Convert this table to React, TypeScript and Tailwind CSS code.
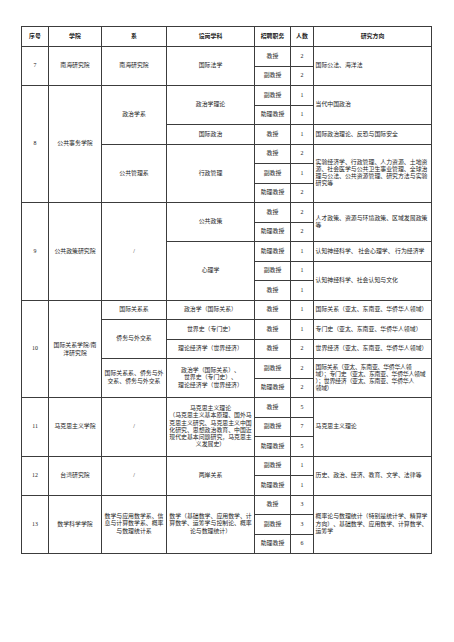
import type { ReactNode } from 'react';

type CellProps = {
  children?: ReactNode;
  span?: string;
  left?: boolean;
  bold?: boolean;
  className?: string;
};

function Cell({ children, span = '', left = false, bold = false, className = '' }: CellProps) {
  return (
    <div
      className={`flex items-center bg-white whitespace-pre leading-[7.2px] ${
        left ? 'justify-start pl-[1.5px] text-left' : 'justify-center px-[1px] text-center'
      } ${bold ? 'font-bold' : ''} ${span} ${className}`}
    >
      <span>{children}</span>
    </div>
  );
}

const headers = ['序号', '学院', '系', '设岗学科', '招聘职务', '人数', '研究方向'];

export default function App() {
  return (
    <div className="min-h-[642px] w-[454px] bg-white pt-[26px] pl-[21px]">
      <div
        className="grid w-max grid-cols-[26px_52px_64px_87px_35px_22px_117px] grid-rows-[19px_repeat(26,18.5px)] gap-px bg-[#3c3c3c] p-px text-[5.9px] text-[#1c1c1c]"
        style={{ fontFamily: '"Liberation Serif", "Noto Sans CJK SC", serif' }}
      >
        {headers.map((h) => (
          <Cell key={h} bold>
            {h}
          </Cell>
        ))}

        {/* 7 */}
        <Cell span="row-span-2">7</Cell>
        <Cell span="row-span-2">南海研究院</Cell>
        <Cell span="row-span-2">南海研究院</Cell>
        <Cell span="row-span-2">国际法学</Cell>
        <Cell>教授</Cell>
        <Cell>2</Cell>
        <Cell span="row-span-2" left>
          国际公法、海洋法
        </Cell>
        <Cell>副教授</Cell>
        <Cell>2</Cell>

        {/* 8 */}
        <Cell span="row-span-6">8</Cell>
        <Cell span="row-span-6">公共事务学院</Cell>
        <Cell span="row-span-3">政治学系</Cell>
        <Cell span="row-span-2">政治学理论</Cell>
        <Cell>副教授</Cell>
        <Cell>1</Cell>
        <Cell span="row-span-2" left>
          当代中国政治
        </Cell>
        <Cell>助理教授</Cell>
        <Cell>1</Cell>
        <Cell>国际政治</Cell>
        <Cell>教授</Cell>
        <Cell>1</Cell>
        <Cell left>国际政治理论、反恐与国际安全</Cell>
        <Cell span="row-span-3">公共管理系</Cell>
        <Cell span="row-span-3">行政管理</Cell>
        <Cell>教授</Cell>
        <Cell>2</Cell>
        <Cell span="row-span-3" left>
          {'实验经济学、行政管理、人力资源、土地资\n源、社会医学与公共卫生事业管理、全球治\n理与公法、公共资源管理、研究方法与实验\n研究等'}
        </Cell>
        <Cell>副教授</Cell>
        <Cell>1</Cell>
        <Cell>助理教授</Cell>
        <Cell>2</Cell>

        {/* 9 */}
        <Cell span="row-span-5">9</Cell>
        <Cell span="row-span-5">公共政策研究院</Cell>
        <Cell span="row-span-5">/</Cell>
        <Cell span="row-span-2">公共政策</Cell>
        <Cell>教授</Cell>
        <Cell>2</Cell>
        <Cell span="row-span-2" left>
          {'人才政策、资源与环境政策、区域发展政策\n等'}
        </Cell>
        <Cell>助理教授</Cell>
        <Cell>2</Cell>
        <Cell span="row-span-3">心理学</Cell>
        <Cell>助理教授</Cell>
        <Cell>1</Cell>
        <Cell left>认知神经科学、 社会心理学、 行为经济学</Cell>
        <Cell>副教授</Cell>
        <Cell>1</Cell>
        <Cell span="row-span-2" left>
          认知神经科学、社会认知与文化
        </Cell>
        <Cell>教授</Cell>
        <Cell>1</Cell>

        {/* 10 */}
        <Cell span="row-span-5">10</Cell>
        <Cell span="row-span-5" className="leading-[8px]">
          {'国际关系学院/南\n洋研究院'}
        </Cell>
        <Cell>国际关系系</Cell>
        <Cell>政治学（国际关系）</Cell>
        <Cell>教授</Cell>
        <Cell>1</Cell>
        <Cell left>国际关系（亚太、东南亚、华侨华人领域）</Cell>
        <Cell span="row-span-2">侨务与外交系</Cell>
        <Cell>世界史（专门史）</Cell>
        <Cell>教授</Cell>
        <Cell>1</Cell>
        <Cell left>专门史（亚太、东南亚、华侨华人领域）</Cell>
        <Cell>理论经济学（世界经济）</Cell>
        <Cell>教授</Cell>
        <Cell>2</Cell>
        <Cell left>世界经济（亚太、东南亚、华侨华人领域）</Cell>
        <Cell span="row-span-2" className="leading-[7.6px]">
          {'国际关系系、侨务与外\n交系、侨务与外交系'}
        </Cell>
        <Cell span="row-span-2" className="leading-[7.6px]">
          {'政治学（国际关系）、\n世界史（专门史）、\n理论经济学（世界经济）'}
        </Cell>
        <Cell>副教授</Cell>
        <Cell>2</Cell>
        <Cell span="row-span-2" left className="tracking-[-0.25px]">
          {'国际关系（亚太、东南亚、华侨华人领\n域）；专门史（亚太、东南亚、华侨华人领域\n）；世界经济（亚太、东南亚、华侨华人\n领域）'}
        </Cell>
        <Cell>助理教授</Cell>
        <Cell>2</Cell>

        {/* 11 */}
        <Cell span="row-span-3">11</Cell>
        <Cell span="row-span-3">马克思主义学院</Cell>
        <Cell span="row-span-3">/</Cell>
        <Cell span="row-span-3">
          {'马克思主义理论\n（马克思主义基本原理、国外马\n克思主义研究、马克思主义中国\n化研究、思想政治教育、中国近\n现代史基本问题研究，马克思主\n义发展史）'}
        </Cell>
        <Cell>教授</Cell>
        <Cell>5</Cell>
        <Cell span="row-span-3" left>
          马克思主义理论
        </Cell>
        <Cell>副教授</Cell>
        <Cell>7</Cell>
        <Cell>助理教授</Cell>
        <Cell>5</Cell>

        {/* 12 */}
        <Cell span="row-span-2">12</Cell>
        <Cell span="row-span-2">台湾研究院</Cell>
        <Cell span="row-span-2">/</Cell>
        <Cell span="row-span-2">两岸关系</Cell>
        <Cell>副教授</Cell>
        <Cell>1</Cell>
        <Cell span="row-span-2" left>
          历史、政治、经济、教育、文学、法律等
        </Cell>
        <Cell>助理教授</Cell>
        <Cell>1</Cell>

        {/* 13 */}
        <Cell span="row-span-3">13</Cell>
        <Cell span="row-span-3">数学科学学院</Cell>
        <Cell span="row-span-3" className="leading-[7.6px]">
          {'数学与应用数学系、信\n息与计算数学系、概率\n与数理统计系'}
        </Cell>
        <Cell span="row-span-3" className="leading-[7.6px]">
          {'数学（基础数学、应用数学、计\n算数学、运筹学与控制论、概率\n论与数理统计）'}
        </Cell>
        <Cell>教授</Cell>
        <Cell>3</Cell>
        <Cell span="row-span-3" left>
          {'概率论与数理统计（特别是统计学、精算学\n方向）、基础数学、应用数学、计算数学、\n运筹学'}
        </Cell>
        <Cell>副教授</Cell>
        <Cell>3</Cell>
        <Cell>助理教授</Cell>
        <Cell>6</Cell>
      </div>
    </div>
  );
}
